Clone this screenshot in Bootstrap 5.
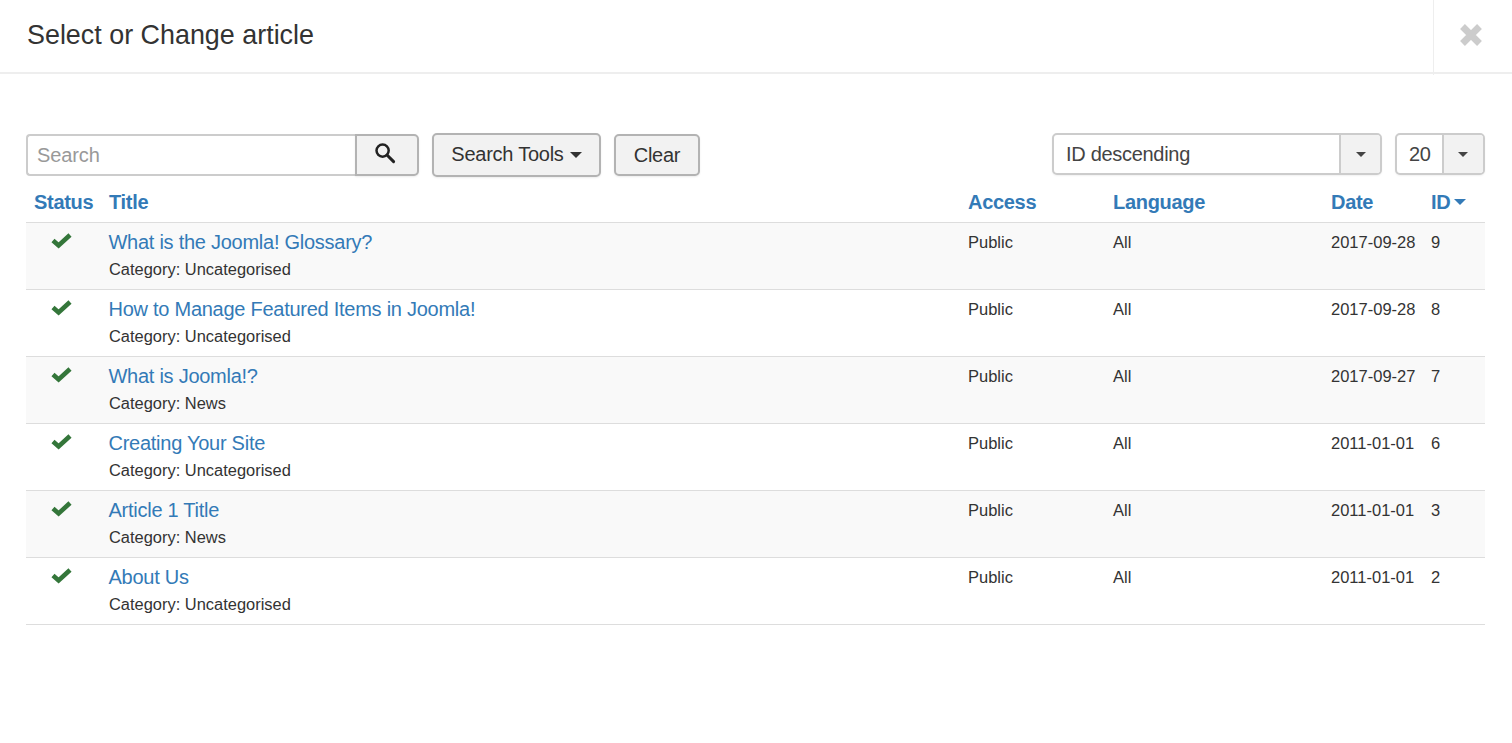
<!DOCTYPE html>
<html lang="en">
<head>
<meta charset="utf-8">
<title>Select or Change article</title>
<link href="https://cdn.jsdelivr.net/npm/bootstrap@5.3.0/dist/css/bootstrap.min.css" rel="stylesheet">
<style>
body{font-family:"Liberation Sans",Arial,sans-serif;color:#333;background:#fff;font-size:16.5px;}
.dlg-head{height:74px;border-bottom:2px solid #eee;}
.dlg-title{font-size:26.9px;font-weight:400;margin:0;padding-left:27px;line-height:70px;color:#333;}
.dlg-close{width:79px;height:75px;border:0;border-left:1px solid #eee;background:transparent;padding:0 4px 5px 0;}
.dlg-body{padding:59px 27px 0 26px;}
.tool-bar{height:44px;margin-bottom:2px;}
.search-box{width:393px;height:42px;margin-top:1px;}
.search-box .form-control{width:329px;flex:none;height:42px;border:2px solid #ccc;border-right-width:0;border-radius:4px 0 0 4px;font-size:20px;letter-spacing:-.1px;padding:0 9px;color:#555;box-shadow:none;}
.search-box .form-control::placeholder{color:#999;opacity:1;}
.tool-btn{background:#f2f2f2;border:2px solid #b3b3b3;border-radius:5px;color:#333;font-size:20px;letter-spacing:-.25px;padding:0;line-height:1;display:flex;align-items:center;justify-content:center;box-shadow:0 1px 2px rgba(0,0,0,.08);}
.tool-btn:hover{background:#e6e6e6;border-color:#adadad;}
.go-btn{width:64px;height:42px;border-radius:0 5px 5px 0;padding:0 5px 5px 0;}
.tools-btn{width:169px;height:44px;margin-left:13px;padding-bottom:3px;}
.clear-btn{width:86px;height:42px;margin:1px 0 0 13px;}
.caret-dn{display:inline-block;width:0;height:0;border-left:6px solid transparent;border-right:6px solid transparent;border-top:6px solid #333;}
.tools-btn .caret-dn{margin:3px 0 0 6px;}
.pick-box{height:42px;border:2px solid #ccc;border-radius:5px;display:flex;background:#fff;font-size:20px;letter-spacing:-.3px;color:#444;box-shadow:0 1px 2px rgba(0,0,0,.06);}
.pick-sort{width:330px;}
.pick-limit{width:90px;margin-left:13px;}
.pick-val{flex:1;padding-left:12px;line-height:38px;}
.pick-arrow{width:41px;background:#f2f2f2;border-left:2px solid #ccc;border-radius:0 3px 3px 0;display:flex;align-items:center;justify-content:center;}
.pick-limit .pick-arrow{padding-right:2px;}
.pick-arrow .caret-dn{border-left-width:5.5px;border-right-width:5.5px;border-top-width:5px;border-top-color:#444;}
.art-table{table-layout:fixed;width:1459px;margin:0;border-collapse:collapse;--bs-table-striped-bg:#f9f9f9;--bs-table-bg:transparent;--bs-table-color:#333;--bs-table-striped-color:#333;}
.c-status{width:75px}.c-title{width:859px}.c-access{width:145px}.c-lang{width:218px}.c-date{width:100px}.c-id{width:62px}
.art-table th{font-size:20px;letter-spacing:-.3px;font-weight:700;height:43px;padding:4px 0 0 8px;border-bottom:1px solid #ddd;vertical-align:middle;white-space:nowrap;line-height:24px;}
.art-table th a{color:#337ab7;text-decoration:none;}
.art-table td{height:67px;padding:6px 0 0 8px;border-bottom:1px solid #ddd;vertical-align:top;font-size:16.5px;line-height:26px;white-space:nowrap;}
.art-link{display:block;font-size:20px;letter-spacing:-.26px;line-height:26px;color:#337ab7;text-decoration:none;margin-left:-.5px;}
.art-cat{display:block;font-size:16.45px;line-height:26px;margin-top:1px;color:#333;}
.check-ico{display:block;margin:3px 0 0 16px;}
.sort-caret{display:inline-block;width:0;height:0;margin:0 0 4px 4px;border-left:6px solid transparent;border-right:6px solid transparent;border-top:6px solid #337ab7;}
</style>
</head>
<body>
<div class="dlg-head d-flex justify-content-between align-items-start">
  <h3 class="dlg-title">Select or Change article</h3>
  <button type="button" class="dlg-close d-flex align-items-center justify-content-center" aria-label="Close">
    <svg width="24" height="24" viewBox="0 0 24 24"><path d="M3.5 3.5 L20.5 20.5 M20.5 3.5 L3.5 20.5" stroke="#ccc" stroke-width="6.8" fill="none"/></svg>
  </button>
</div>
<div class="dlg-body">
  <div class="tool-bar d-flex justify-content-between align-items-start">
    <div class="d-flex align-items-start">
      <div class="search-box d-flex">
        <input type="text" class="form-control" placeholder="Search">
        <button type="button" class="tool-btn go-btn" aria-label="Search">
          <svg width="22" height="22" viewBox="0 0 22 22"><circle cx="8.6" cy="8.6" r="6.1" fill="none" stroke="#222" stroke-width="2.5"/><path d="M13 13 L19.6 19.6" stroke="#222" stroke-width="3" stroke-linecap="round"/></svg>
        </button>
      </div>
      <button type="button" class="tool-btn tools-btn">Search Tools<span class="caret-dn"></span></button>
      <button type="button" class="tool-btn clear-btn">Clear</button>
    </div>
    <div class="d-flex align-items-start">
      <div class="pick-box pick-sort"><span class="pick-val">ID descending</span><span class="pick-arrow"><span class="caret-dn"></span></span></div>
      <div class="pick-box pick-limit"><span class="pick-val">20</span><span class="pick-arrow"><span class="caret-dn"></span></span></div>
    </div>
  </div>
  <table class="table table-striped art-table">
    <colgroup><col class="c-status"><col class="c-title"><col class="c-access"><col class="c-lang"><col class="c-date"><col class="c-id"></colgroup>
    <thead>
      <tr><th><a href="#">Status</a></th><th><a href="#">Title</a></th><th><a href="#">Access</a></th><th><a href="#">Language</a></th><th><a href="#">Date</a></th><th><a href="#">ID<span class="sort-caret"></span></a></th></tr>
    </thead>
    <tbody>
      <tr><td><svg class="check-ico" width="24" height="18" viewBox="0 0 24 18"><path d="M3 8.5 L8.6 13.5 L20 3" fill="none" stroke="#34763a" stroke-width="4.6"/></svg></td><td><a class="art-link" href="#">What is the Joomla! Glossary?</a><span class="art-cat">Category: Uncategorised</span></td><td>Public</td><td>All</td><td>2017-09-28</td><td>9</td></tr>
      <tr><td><svg class="check-ico" width="24" height="18" viewBox="0 0 24 18"><path d="M3 8.5 L8.6 13.5 L20 3" fill="none" stroke="#34763a" stroke-width="4.6"/></svg></td><td><a class="art-link" href="#">How to Manage Featured Items in Joomla!</a><span class="art-cat">Category: Uncategorised</span></td><td>Public</td><td>All</td><td>2017-09-28</td><td>8</td></tr>
      <tr><td><svg class="check-ico" width="24" height="18" viewBox="0 0 24 18"><path d="M3 8.5 L8.6 13.5 L20 3" fill="none" stroke="#34763a" stroke-width="4.6"/></svg></td><td><a class="art-link" href="#">What is Joomla!?</a><span class="art-cat">Category: News</span></td><td>Public</td><td>All</td><td>2017-09-27</td><td>7</td></tr>
      <tr><td><svg class="check-ico" width="24" height="18" viewBox="0 0 24 18"><path d="M3 8.5 L8.6 13.5 L20 3" fill="none" stroke="#34763a" stroke-width="4.6"/></svg></td><td><a class="art-link" href="#">Creating Your Site</a><span class="art-cat">Category: Uncategorised</span></td><td>Public</td><td>All</td><td>2011-01-01</td><td>6</td></tr>
      <tr><td><svg class="check-ico" width="24" height="18" viewBox="0 0 24 18"><path d="M3 8.5 L8.6 13.5 L20 3" fill="none" stroke="#34763a" stroke-width="4.6"/></svg></td><td><a class="art-link" href="#">Article 1 Title</a><span class="art-cat">Category: News</span></td><td>Public</td><td>All</td><td>2011-01-01</td><td>3</td></tr>
      <tr><td><svg class="check-ico" width="24" height="18" viewBox="0 0 24 18"><path d="M3 8.5 L8.6 13.5 L20 3" fill="none" stroke="#34763a" stroke-width="4.6"/></svg></td><td><a class="art-link" href="#">About Us</a><span class="art-cat">Category: Uncategorised</span></td><td>Public</td><td>All</td><td>2011-01-01</td><td>2</td></tr>
    </tbody>
  </table>
</div>
<script src="https://cdn.jsdelivr.net/npm/bootstrap@5.3.0/dist/js/bootstrap.bundle.min.js"></script>
</body>
</html>
